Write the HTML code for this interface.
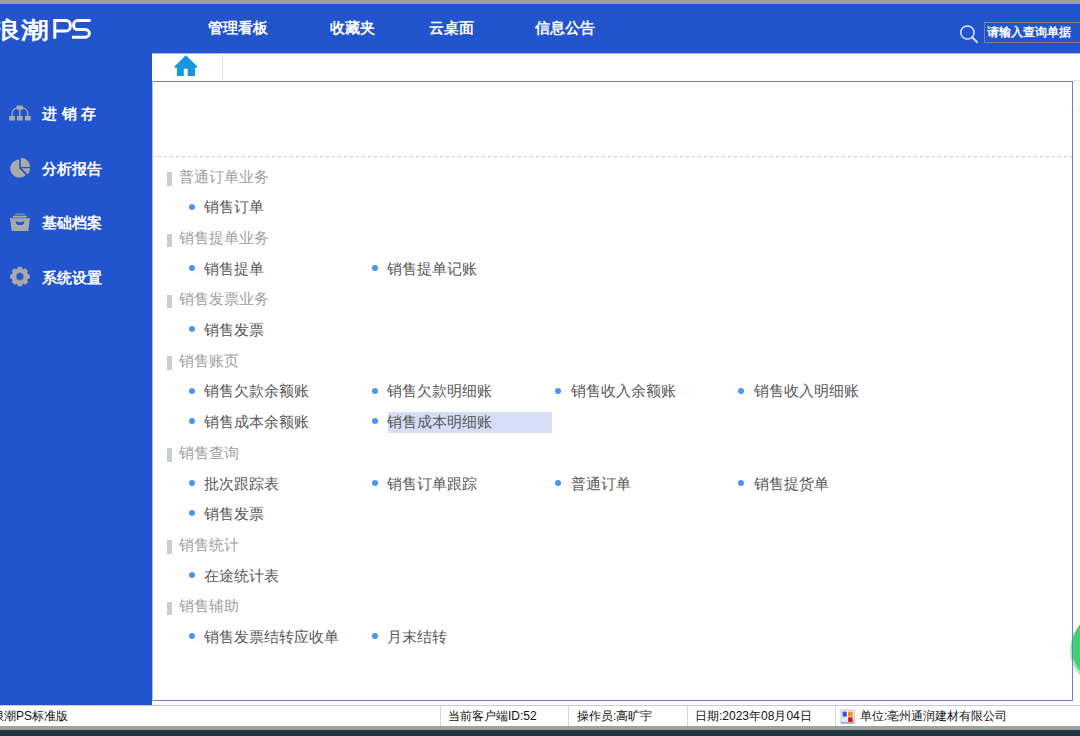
<!DOCTYPE html>
<html><head><meta charset="utf-8">
<style>
*{margin:0;padding:0;box-sizing:border-box}
html,body{width:1080px;height:736px;overflow:hidden;background:#fff;font-family:"Liberation Sans",sans-serif;position:relative}
.abs{position:absolute}
.nav{position:absolute;top:18px;color:#fff;font-size:14.5px;font-weight:bold;line-height:20px;white-space:nowrap}
.side{position:absolute;left:42px;color:#fff;font-size:14.5px;font-weight:bold;line-height:18px;white-space:nowrap}
.sec{position:absolute;left:179px;color:#a0a0a0;font-size:14.5px;line-height:18px;white-space:nowrap}
.bar{position:absolute;left:167px;width:5px;height:13.5px;background:#c5ced8}
.it{position:absolute;color:#585858;font-size:14.5px;line-height:18px;white-space:nowrap}
.dot{position:absolute;width:6px;height:6px;border-radius:50%;background:#4a94f5}
.st{position:absolute;top:709px;color:#111;font-size:12px;line-height:14px;white-space:nowrap}
.sep{position:absolute;top:706px;width:1px;height:20px;background:#d8d8d8}
</style></head>
<body>
<div class="abs" style="left:0;top:0;width:1080px;height:4px;background:#9c9e9e"></div>
<div class="abs" style="left:0;top:4px;width:1080px;height:49px;background:#2254cd"></div>
<div class="abs" style="left:0;top:53px;width:152px;height:652px;background:#2254cd"></div>
<svg class="abs" style="left:1060px;top:600px" width="20" height="90" viewBox="1060 600 20 90"><circle cx="1106.8" cy="650.5" r="32.5" fill="none" stroke="#3fd274" stroke-width="8.6" opacity="0.45"/><circle cx="1108.5" cy="647.5" r="32.5" fill="none" stroke="#3fd274" stroke-width="8.6"/></svg>
<div class="abs" style="left:152px;top:81px;width:921px;height:620px;border:1px solid #6b80c2;border-left:none"></div>
<div class="abs" style="left:152px;top:81px;width:1px;height:620px;background:#b0bce2"></div>
<div class="abs" style="left:152px;top:53px;width:928px;height:1px;background:#a3b3e6"></div>
<div class="abs" style="left:222px;top:53px;width:1px;height:28px;background:#e3e3e3"></div>
<div class="abs" style="left:1073px;top:80px;width:7px;height:1px;background:#e4e4e4"></div>
<div class="abs" style="left:1076px;top:110px;width:4px;height:1px;background:#dfe6f5"></div>
<div class="abs" style="left:152px;top:156px;width:920px;height:1px;background:repeating-linear-gradient(90deg,#cfcfcf 0,#cfcfcf 3px,transparent 3px,transparent 6px)"></div>
<div class="abs" style="left:0;top:705px;width:1080px;height:1px;background:#c9c9c9"></div>
<div class="abs" style="left:0;top:726px;width:1080px;height:4px;background:#9fa1a1"></div>
<div class="abs" style="left:0;top:730px;width:1080px;height:6px;background:#213842"></div>
<!-- logo -->
<div class="abs" style="left:-8.4px;top:14.5px;color:#fff;font-size:23px;font-weight:bold;line-height:30px;white-space:nowrap;transform:scaleX(1.2);transform-origin:0 0">浪</div>
<div class="abs" style="left:21px;top:14.5px;color:#fff;font-size:23px;font-weight:bold;line-height:30px;white-space:nowrap;transform:scaleX(1.2);transform-origin:0 0">潮</div>
<svg class="abs" style="left:0;top:0" width="1080" height="300" viewBox="0 0 1080 300">
 <g fill="none" stroke="#fff" stroke-width="3">
  <path d="M54.8 38.7 V20.6 H66 A4.3 4.3 0 0 1 70.3 24.9 V26.7 A4.3 4.3 0 0 1 66 31 H54.8"/>
  <path d="M90.7 20.6 H77.8 A4.2 4.2 0 0 0 73.6 24.8 V25.4 A4.2 4.2 0 0 0 77.8 29.6 H85.2 A4.2 4.2 0 0 1 89.4 33.8 V33.2 A4 4 0 0 1 85.4 37.2 H72"/>
 </g>
 <!-- home -->
 <path fill="#1696dd" d="M185.8 55.2 L197.2 66.2 L197.2 67.8 L195 67.8 L195 76 L187.7 76 L187.7 68.7 L183.8 68.7 L183.8 76 L176.9 76 L176.9 67.8 L174.7 67.8 L174.7 66.2 Z"/>
 <!-- search -->
 <circle cx="967.4" cy="32.5" r="6.6" fill="none" stroke="#e2e8f6" stroke-width="1.5"/>
 <path d="M972.2 37.3 L977 42" stroke="#e2e8f6" stroke-width="1.8" stroke-linecap="round"/>
 <!-- sidebar icons -->
 <g fill="#a9a9a9">
  <rect x="16.6" y="105.5" width="6.4" height="4.3" rx="0.8"/>
  <rect x="9.1" y="115.9" width="5.9" height="4.7" rx="0.6"/>
  <rect x="17" y="115.9" width="5.75" height="4.7" rx="0.6"/>
  <rect x="25" y="115.9" width="5.7" height="4.7" rx="0.6"/>
  <rect x="19.1" y="109.5" width="1.4" height="6.6"/>
  <path d="M19.3 159.6 A9 9 0 1 0 25.7 174.9 L19.3 168.6 Z"/>
  <path d="M20.9 157.7 A9.2 9.2 0 0 1 30.1 166.9 L20.9 166.9 Z"/>
  <path d="M30.1 168.3 A8.6 8.6 0 0 1 27.6 174.4 L21.5 168.3 Z"/>
  <rect x="15" y="213.3" width="9.8" height="1.9" opacity="0.55"/>
  <rect x="13" y="215.8" width="13.8" height="1.8"/>
  <path d="M9.9 217.4 L11.2 218.3 L28.6 218.3 L29.9 217.4 L28.3 230.9 L11.7 230.9 Z M15.7 221.1 Q15.8 225 18.4 225.1 L21.6 225.1 Q24.2 225 24.3 221.1 Q20 223.4 15.7 221.1 Z" fill-rule="evenodd"/>
  <path fill-rule="evenodd" stroke="#a9a9a9" stroke-width="0.6" stroke-linejoin="round" d="M17.63 268.83 L18.11 267.07 L21.69 267.07 L22.17 268.83 L23.72 269.47 L25.30 268.57 L27.83 271.10 L26.93 272.68 L27.57 274.23 L29.33 274.71 L29.33 278.29 L27.57 278.77 L26.93 280.32 L27.83 281.90 L25.30 284.43 L23.72 283.53 L22.17 284.17 L21.69 285.93 L18.11 285.93 L17.63 284.17 L16.08 283.53 L14.50 284.43 L11.97 281.90 L12.87 280.32 L12.23 278.77 L10.47 278.29 L10.47 274.71 L12.23 274.23 L12.87 272.68 L11.97 271.10 L14.50 268.57 L16.08 269.47 Z M23.8 276.5 A3.9 3.9 0 1 0 16 276.5 A3.9 3.9 0 1 0 23.8 276.5 Z"/>
 </g>
 <g fill="none" stroke="#a9a9a9" stroke-width="1.3">
  <path d="M12.1 116.2 V113.3 A5.2 5.2 0 0 1 17.3 108.1"/>
  <path d="M27.8 116.2 V113.3 A5.2 5.2 0 0 0 22.6 108.1"/>
 </g>
</svg>
<div class="nav" style="left:208px">管理看板</div>
<div class="nav" style="left:330px">收藏夹</div>
<div class="nav" style="left:429px">云桌面</div>
<div class="nav" style="left:535px">信息公告</div>
<div class="abs" style="left:984px;top:22px;width:100px;height:21px;border:1px solid #80818c"></div>
<div class="abs" style="left:987px;top:25px;color:#fff;font-size:11.7px;font-weight:bold;line-height:14px;white-space:nowrap">请输入查询单据</div>
<div class="side" style="top:105px;letter-spacing:4.6px">进销存</div>
<div class="side" style="top:159.5px">分析报告</div>
<div class="side" style="top:214px">基础档案</div>
<div class="side" style="top:268.5px">系统设置</div>
<div class="st" style="left:-8px">浪潮PS标准版</div>
<div class="sep" style="left:440px"></div>
<div class="st" style="left:448px">当前客户端ID:52</div>
<div class="sep" style="left:568px"></div>
<div class="st" style="left:577px">操作员:高旷宇</div>
<div class="sep" style="left:687px"></div>
<div class="st" style="left:695px">日期:2023年08月04日</div>
<div class="sep" style="left:835px"></div>
<svg class="abs" style="left:840px;top:709px" width="16" height="16" viewBox="0 0 16 16">
 <rect x="1" y="1" width="13.5" height="13" fill="#f4f6fa" stroke="#c2c6ce" stroke-width="1"/>
 <rect x="1" y="13.3" width="13.5" height="1.2" fill="#8f9b9b"/>
 <rect x="2.6" y="2.6" width="4.2" height="5" fill="#3a56c4"/>
 <rect x="8.1" y="2.6" width="4.6" height="5" fill="#ff8a10"/>
 <rect x="2.3" y="8.3" width="5" height="4.6" fill="#dce8fa"/>
 <rect x="8.1" y="8.3" width="4.6" height="4.6" fill="#d01818"/>
</svg>
<div class="st" style="left:860px">单位:亳州通润建材有限公司</div>
<!--CONTENT-->
<div class="bar" style="top:172.30px"></div>
<div class="sec" style="top:167.80px">普通订单业务</div>
<div class="dot" style="left:188.85px;top:203.77px"></div>
<div class="it" style="left:204.0px;top:198.47px">销售订单</div>
<div class="bar" style="top:233.64px"></div>
<div class="sec" style="top:229.14px">销售提单业务</div>
<div class="dot" style="left:188.85px;top:265.11px"></div>
<div class="it" style="left:204.0px;top:259.81px">销售提单</div>
<div class="dot" style="left:371.85px;top:265.11px"></div>
<div class="it" style="left:387.3px;top:259.81px">销售提单记账</div>
<div class="bar" style="top:294.98px"></div>
<div class="sec" style="top:290.48px">销售发票业务</div>
<div class="dot" style="left:188.85px;top:326.45px"></div>
<div class="it" style="left:204.0px;top:321.15px">销售发票</div>
<div class="bar" style="top:356.32px"></div>
<div class="sec" style="top:351.82px">销售账页</div>
<div class="dot" style="left:188.85px;top:387.79px"></div>
<div class="it" style="left:204.0px;top:382.49px">销售欠款余额账</div>
<div class="dot" style="left:371.85px;top:387.79px"></div>
<div class="it" style="left:387.3px;top:382.49px">销售欠款明细账</div>
<div class="dot" style="left:554.85px;top:387.79px"></div>
<div class="it" style="left:570.6px;top:382.49px">销售收入余额账</div>
<div class="dot" style="left:737.85px;top:387.79px"></div>
<div class="it" style="left:753.9px;top:382.49px">销售收入明细账</div>
<div class="dot" style="left:188.85px;top:418.46px"></div>
<div class="it" style="left:204.0px;top:413.16px">销售成本余额账</div>
<div class="abs" style="left:388px;top:412px;width:164px;height:21px;background:#d5def5"></div>
<div class="dot" style="left:371.85px;top:418.46px"></div>
<div class="it" style="left:387.3px;top:413.16px">销售成本明细账</div>
<div class="bar" style="top:448.33px"></div>
<div class="sec" style="top:443.83px">销售查询</div>
<div class="dot" style="left:188.85px;top:479.80px"></div>
<div class="it" style="left:204.0px;top:474.50px">批次跟踪表</div>
<div class="dot" style="left:371.85px;top:479.80px"></div>
<div class="it" style="left:387.3px;top:474.50px">销售订单跟踪</div>
<div class="dot" style="left:554.85px;top:479.80px"></div>
<div class="it" style="left:570.6px;top:474.50px">普通订单</div>
<div class="dot" style="left:737.85px;top:479.80px"></div>
<div class="it" style="left:753.9px;top:474.50px">销售提货单</div>
<div class="dot" style="left:188.85px;top:510.47px"></div>
<div class="it" style="left:204.0px;top:505.17px">销售发票</div>
<div class="bar" style="top:540.34px"></div>
<div class="sec" style="top:535.84px">销售统计</div>
<div class="dot" style="left:188.85px;top:571.81px"></div>
<div class="it" style="left:204.0px;top:566.51px">在途统计表</div>
<div class="bar" style="top:601.68px"></div>
<div class="sec" style="top:597.18px">销售辅助</div>
<div class="dot" style="left:188.85px;top:633.15px"></div>
<div class="it" style="left:204.0px;top:627.85px">销售发票结转应收单</div>
<div class="dot" style="left:371.85px;top:633.15px"></div>
<div class="it" style="left:387.3px;top:627.85px">月末结转</div>
<!--/CONTENT-->
</body></html>
